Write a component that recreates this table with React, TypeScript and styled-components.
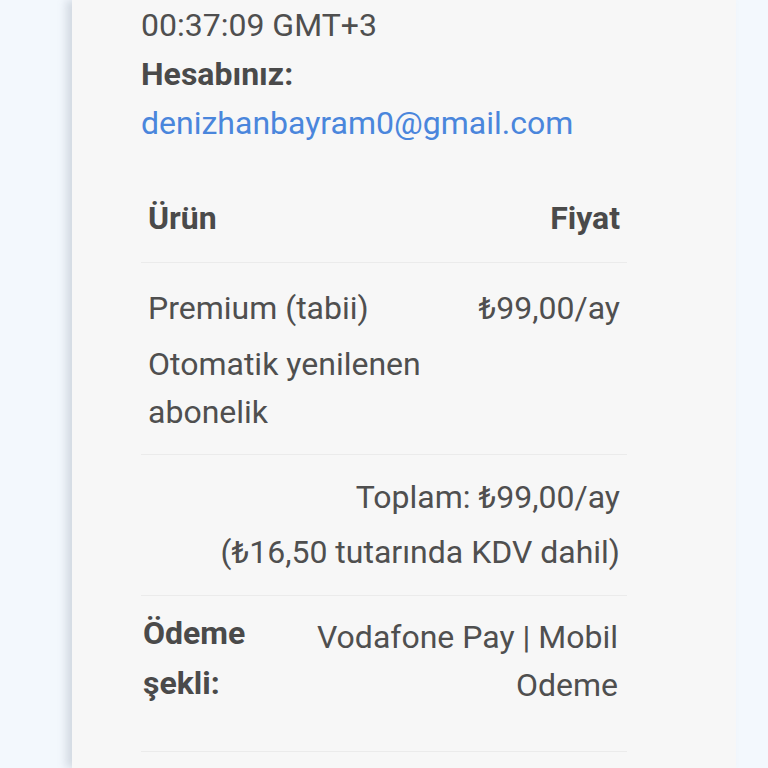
import React from "react";
import styled, { createGlobalStyle } from "styled-components";

const Global = createGlobalStyle`
  html, body { margin: 0; padding: 0; background: #f3f8fd; }
  body { font-family: Roboto, "Noto Sans", sans-serif; color: #4f4f4f; }
`;

const Page = styled.div`
  display: flex;
  min-height: 768px;
`;

const Card = styled.div`
  margin-left: 72px;
  width: 664px;
  min-height: 768px;
  background: #f7f7f7;
  box-shadow: -6px 0 8px rgba(120, 130, 150, 0.25);
  padding: 1px 109px 0 69px;
  box-sizing: border-box;
`;

const Line = styled.div<{ $bold?: boolean; $link?: boolean }>`
  font-size: 32px;
  line-height: 49px;
  font-weight: ${(p) => (p.$bold ? 700 : 400)};
  color: ${(p) => (p.$link ? "#4a86dc" : p.$bold ? "#4a4a4a" : "#4f4f4f")};
`;

const Table = styled.div`
  margin-top: 26px;
  width: 486px;
`;

const Row = styled.div<{ $pt?: number; $pb?: number; $pl?: number; $pr?: number }>`
  display: flex;
  justify-content: space-between;
  align-items: flex-start;
  gap: 24px;
  padding: ${(p) => p.$pt ?? 20}px ${(p) => p.$pr ?? 7}px ${(p) => p.$pb ?? 20}px
    ${(p) => p.$pl ?? 7}px;
  border-bottom: 1px solid #ebebeb;
  font-size: 32px;
  line-height: 48px;
`;

const Head = styled.div<{ $lh?: number }>`
  font-weight: 700;
  color: #4a4a4a;
  line-height: ${(p) => p.$lh ?? 48}px;
`;

const Cell = styled.div<{ $right?: boolean; $mt?: number }>`
  text-align: ${(p) => (p.$right ? "right" : "left")};
  margin-left: ${(p) => (p.$right ? "auto" : "0")};
  margin-top: ${(p) => p.$mt ?? 0}px;
`;

const Sub = styled.div<{ $mt?: number }>`
  margin-top: ${(p) => p.$mt ?? 8}px;
`;

export default function App() {
  return (
    <>
      <Global />
      <Page>
        <Card>
          <Line>00:37:09 GMT+3</Line>
          <Line $bold>Hesabınız:</Line>
          <Line $link>denizhanbayram0@gmail.com</Line>
          <Table>
            <Row>
              <Head>Ürün</Head>
              <Head>Fiyat</Head>
            </Row>
            <Row $pt={21} $pb={18}>
              <Cell>
                <div>Premium (tabii)</div>
                <Sub $mt={8}>
                  Otomatik yenilenen
                  <br />
                  abonelik
                </Sub>
              </Cell>
              <Cell $right>₺99,00/ay</Cell>
            </Row>
            <Row $pt={18} $pb={19}>
              <Cell $right>
                <div>Toplam: ₺99,00/ay</div>
                <Sub $mt={7}>(₺16,50 tutarında KDV dahil)</Sub>
              </Cell>
            </Row>
            <Row $pt={12} $pb={42} $pl={2} $pr={9}>
              <Head $lh={50}>
                <div>Ödeme</div>
                <div>şekli:</div>
              </Head>
              <Cell $right $mt={5}>
                <div>Vodafone Pay | Mobil</div>
                <div>Odeme</div>
              </Cell>
            </Row>
          </Table>
        </Card>
      </Page>
    </>
  );
}
